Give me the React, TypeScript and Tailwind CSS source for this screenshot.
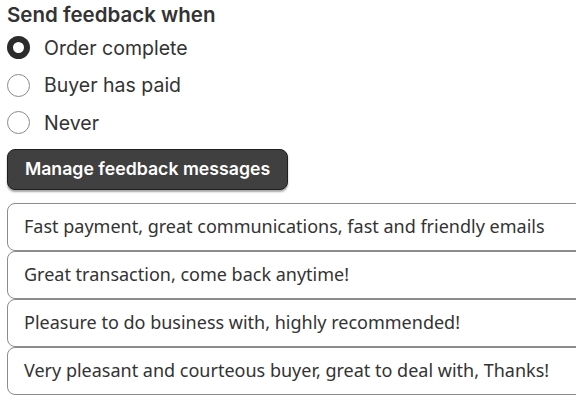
import { useState } from 'react';

const options = ['Order complete', 'Buyer has paid', 'Never'];

const messages = [
  'Fast payment, great communications, fast and friendly emails',
  'Great transaction, come back anytime!',
  'Pleasure to do business with, highly recommended!',
  'Very pleasant and courteous buyer, great to deal with, Thanks!',
];

export default function App() {
  const [selected, setSelected] = useState(0);

  return (
    <div className="w-[576px] h-[400px] overflow-hidden bg-white px-[7px] pt-[2px] font-['Inter',sans-serif] text-[#333]">
      <h2 className="text-[20.5px] leading-[25px] font-semibold text-[#333]">Send feedback when</h2>

      {/* Radio options */}
      <div className="flex flex-col mt-[2px]">
        {options.map((label, i) => (
          <label key={label} className="flex items-center gap-[14px] h-[37.5px] cursor-pointer" onClick={() => setSelected(i)}>
            <span
              className={`w-[23px] h-[23px] rounded-full flex-shrink-0 ${
                selected === i ? 'border-[6px] border-[#2b2b2b] bg-white' : 'border border-[#8a8a8a] bg-white'
              }`}
            />
            <span className="text-[19.5px] leading-[24px] text-[#333]">{label}</span>
          </label>
        ))}
      </div>

      <button className="mt-[7px] w-[281px] h-[41px] rounded-[8px] bg-[#404040] border border-[#1f1f1f] shadow-[0_2px_2px_rgba(0,0,0,0.35)] text-white text-[17.7px] font-semibold">
        Manage feedback messages
      </button>

      {/* Feedback messages */}
      <div className="mt-[13px] w-[640px] flex flex-col font-['Noto_Sans',sans-serif]">
        {messages.map((m) => (
          <div key={m} className="h-[48px] flex items-center pl-[16px] border border-[#8c8c8c] rounded-[8px] text-[18px] text-[#333] whitespace-nowrap">
            {m}
          </div>
        ))}
      </div>
    </div>
  );
}
